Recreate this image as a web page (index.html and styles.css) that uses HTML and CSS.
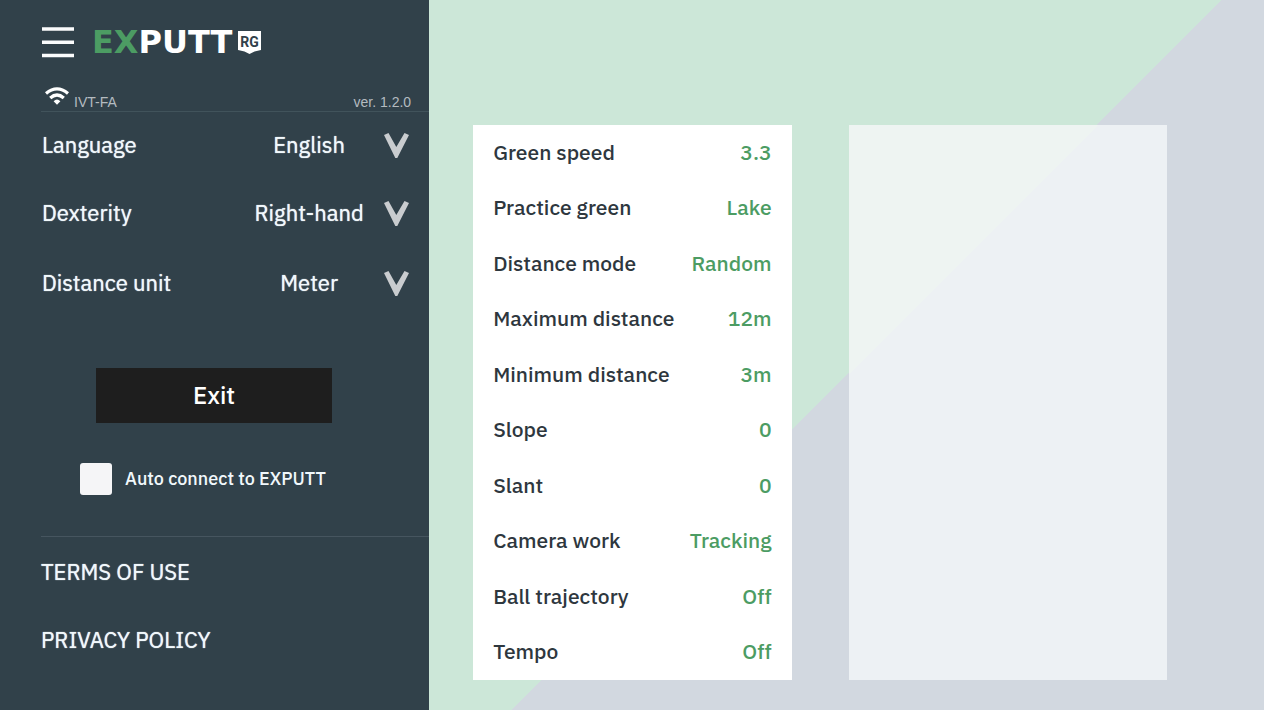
FILE: index.html
```html
<!DOCTYPE html>
<html lang="en">
<head>
<meta charset="utf-8">
<meta name="viewport" content="width=device-width, initial-scale=1">
<title>EXPUTT RG Settings</title>
<link rel="stylesheet" href="styles.css">
</head>
<body class="app">
<aside class="sidebar">
  <header class="brand">
    <button class="menu" type="button" aria-label="Menu">
      <svg width="32" height="32" viewBox="0 0 32 32" aria-hidden="true"><path d="M0 3h32M0 16.200h32M0 29.500h32" stroke="#fbfcfd" stroke-width="3.600"/></svg>
    </button>
    <div class="logo">
      <span class="wordmark"><span class="wordmark-ex">EX</span>PUTT</span>
      <svg class="badge" width="23" height="23" viewBox="0 0 23 23" role="img" aria-label="RG">
        <path d="M0 0h23v19l-6.500 1.500L11.500 23l-5-2.500L0 19z" fill="#fff"/>
        <text class="badge-text" x="11.500" y="15.500" text-anchor="middle">RG</text>
      </svg>
    </div>
  </header>
  <div class="status">
    <svg width="24" height="18" viewBox="0 0 24 18" aria-hidden="true">
      <g fill="none" stroke="#fff" stroke-width="3.200"><path d="M1 6.500Q12-2.800 23 6.500"/><path d="M5.200 11Q12 5 18.800 11"/></g>
      <path d="M8.600 14.200Q12 10.800 15.400 14.200L12 17.800z" fill="#fff"/>
    </svg>
    <span class="network">IVT-FA</span>
    <span class="version">ver. 1.2.0</span>
  </div>
  <form class="options">
    <div class="option">
      <label for="language">Language</label>
      <span class="picker">
        <select id="language"><option>English</option></select>
        <svg class="chevron" viewBox="0 0 25 25" aria-hidden="true"><path d="M0 2L4.500 0 12.300 14 20.500 0 25 2 13.300 25h-2z"/></svg>
      </span>
    </div>
    <div class="option">
      <label for="dexterity">Dexterity</label>
      <span class="picker">
        <select id="dexterity"><option>Right-hand</option></select>
        <svg class="chevron" viewBox="0 0 25 25" aria-hidden="true"><path d="M0 2L4.500 0 12.300 14 20.500 0 25 2 13.300 25h-2z"/></svg>
      </span>
    </div>
    <div class="option">
      <label for="unit">Distance unit</label>
      <span class="picker">
        <select id="unit"><option>Meter</option></select>
        <svg class="chevron" viewBox="0 0 25 25" aria-hidden="true"><path d="M0 2L4.500 0 12.300 14 20.500 0 25 2 13.300 25h-2z"/></svg>
      </span>
    </div>
    <button class="exit" type="button">Exit</button>
    <div class="auto">
      <input id="auto" class="auto-box" type="checkbox">
      <label for="auto">Auto connect to EXPUTT</label>
    </div>
  </form>
  <nav class="legal">
    <a href="#terms">TERMS OF USE</a>
    <a href="#privacy">PRIVACY POLICY</a>
  </nav>
</aside>
<main class="content">
  <ul class="panel settings">
    <li class="setting"><button type="button" class="row"><span>Green speed</span><span class="value">3.3</span></button></li>
    <li class="setting"><button type="button" class="row"><span>Practice green</span><span class="value">Lake</span></button></li>
    <li class="setting"><button type="button" class="row"><span>Distance mode</span><span class="value">Random</span></button></li>
    <li class="setting"><button type="button" class="row"><span>Maximum distance</span><span class="value">12m</span></button></li>
    <li class="setting"><button type="button" class="row"><span>Minimum distance</span><span class="value">3m</span></button></li>
    <li class="setting"><button type="button" class="row"><span>Slope</span><span class="value">0</span></button></li>
    <li class="setting"><button type="button" class="row"><span>Slant</span><span class="value">0</span></button></li>
    <li class="setting"><button type="button" class="row"><span>Camera work</span><span class="value">Tracking</span></button></li>
    <li class="setting"><button type="button" class="row"><span>Ball trajectory</span><span class="value">Off</span></button></li>
    <li class="setting"><button type="button" class="row"><span>Tempo</span><span class="value">Off</span></button></li>
  </ul>
  <section class="panel detail" aria-label="Details"></section>
</main>
</body>
</html>
```
FILE: styles.css
```css
*, *::before, *::after { box-sizing: border-box; }

.app {
  margin: 0;
  min-height: 100vh;
  display: flex;
  font: 500 21px/28px "IBM Plex Sans", "Noto Sans", sans-serif;
  color: #2e373e;
}

button, select { font: inherit; color: inherit; }

.sidebar {
  flex: none;
  width: 33.95%;
  padding: 24px 0 0 41px;
  background: #31414a;
  color: #f1f8fc;
}

.brand { display: flex; align-items: center; height: 36px; }
.menu { padding: 0 1px; border: 0; background: none; display: flex; }
.logo { display: flex; align-items: center; gap: 6px; margin-left: 17px; }
.wordmark { font: 700 32px/36px "DejaVu Sans", sans-serif; color: #fff; }
.wordmark-ex { color: #4c9c63; }
.badge-text { font: 700 14px Roboto, sans-serif; fill: #31414a; }

.status {
  display: flex;
  align-items: flex-end;
  height: 52px;
  padding: 0 18px 0 4px;
  border-bottom: 1px solid #41535b;
  font: 400 14px/18px "Liberation Sans", Arial, sans-serif;
  color: #b4bbc0;
}
.status svg { margin-bottom: 6px; }
.network { margin-left: 5px; }
.version { margin-left: auto; }

.options { display: flex; flex-direction: column; padding-right: 20px; }
.option {
  display: flex;
  align-items: center;
  justify-content: space-between;
  height: 70px;
  padding: 0 0 0 1px;
  font-size: 22px;
  font-weight: 400;
  text-shadow: 0 0 1px currentColor;
}
.option:first-child { height: 66px; }
.picker { position: relative; width: 174px; }
.picker select {
  display: block;
  width: 100%;
  height: 40px;
  padding: 0 26px 0 0;
  border: 0;
  background: none;
  appearance: none;
  text-align: center;
  text-align-last: center;
  text-shadow: inherit;
}
.chevron { position: absolute; right: 0; top: 8px; width: 25px; height: 25px; fill: #c9cccf; pointer-events: none; }

.exit {
  width: 236px;
  height: 55px;
  margin: 50px 0 0 55px;
  padding: 0 0 2px;
  border: 0;
  background: #1e1e1e;
  color: #fff;
  font-size: 24px;
}
.auto { display: flex; align-items: center; gap: 13px; margin: 40px 0 0 39px; font-size: 18px; }
.auto-box {
  appearance: none;
  width: 32px;
  height: 32px;
  margin: 0;
  border-radius: 3px;
  background: #f5f5f7;
}
.auto-box:checked { background: #4c9c63; }

.legal {
  display: flex;
  flex-direction: column;
  gap: 40px;
  margin-top: 41px;
  padding-top: 21px;
  border-top: 1px solid #46555f;
  font-size: 22px;
  font-weight: 400;
  text-shadow: 0 0 1px currentColor;
}
.legal a { color: inherit; text-decoration: none; }

.content {
  flex: 1;
  display: grid;
  grid-template-columns: 1fr 1fr;
  gap: 57px;
  padding: 125px 97px 30px 44px;
  background: linear-gradient(135deg, #cce7d8 51.300%, #d2d8e0 51.300%);
}
.panel { margin: 0; min-width: 0; }
.settings { display: flex; flex-direction: column; padding: 0; list-style: none; background: #fff; }
.setting { flex: 1; display: flex; }
.row {
  flex: 1;
  display: flex;
  align-items: center;
  justify-content: space-between;
  padding: 0 20px 2px;
  border: 0;
  background: none;
  text-align: left;
}
.value { color: #4c9c63; }
.detail { background: linear-gradient(135deg, #eef4f2 28.600%, #edf1f4 28.600%); }
```
